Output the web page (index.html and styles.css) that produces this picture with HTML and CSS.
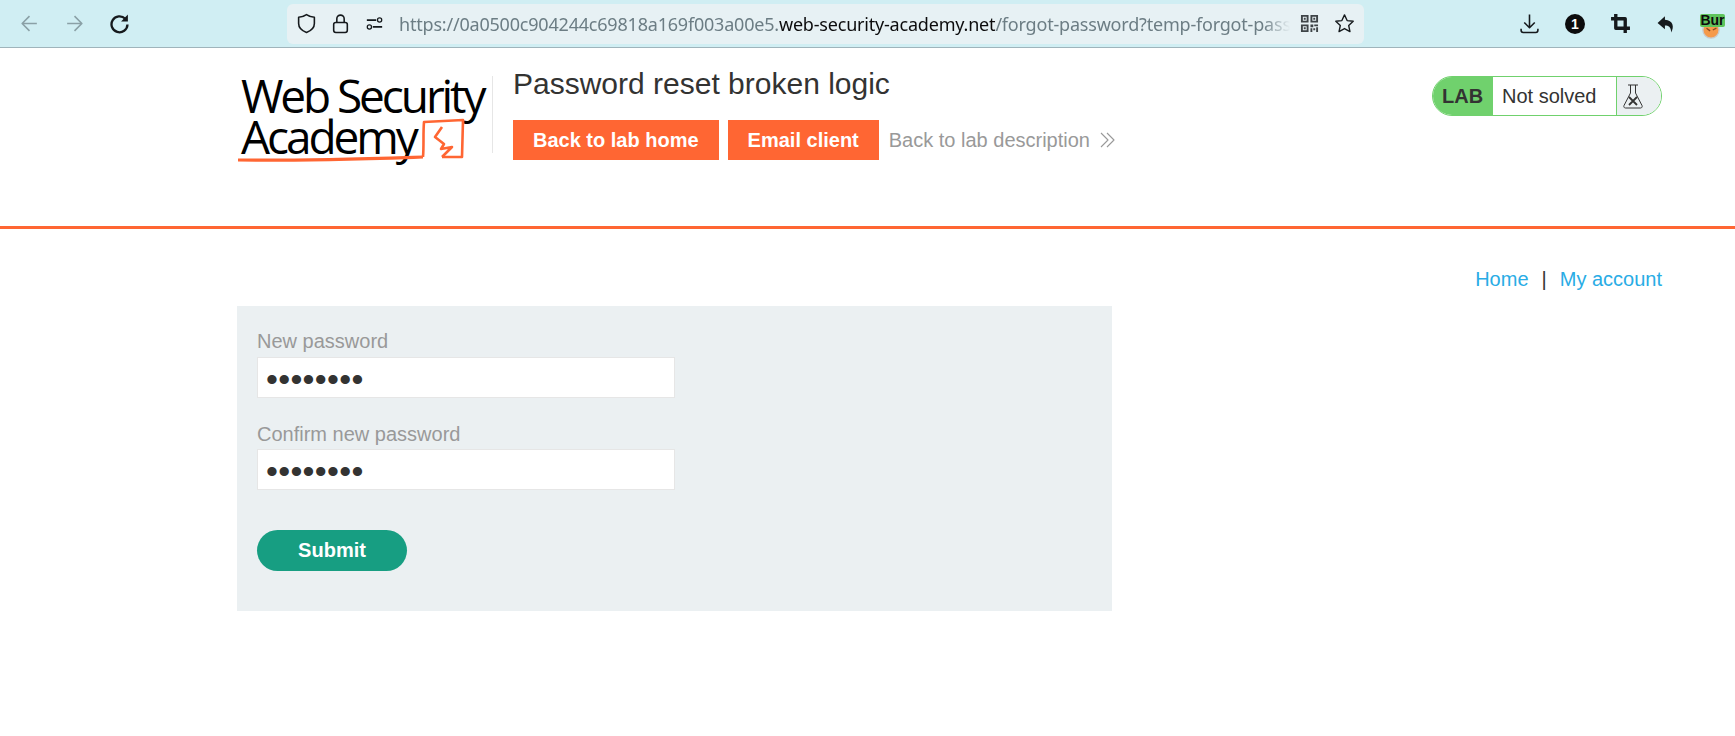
FILE: index.html
```html
<!DOCTYPE html>
<html lang="en">
<head>
    <meta charset="UTF-8">
    <meta name="viewport" content="width=device-width, initial-scale=1.0">
    <title>Password reset broken logic</title>
    <link rel="stylesheet" href="styles.css">
</head>
<body>

    <div class="toolbar">
        <div class="nav-icons">
            <svg class="icon faded" viewBox="0 0 20 20"><path d="M17 10H3M10 3l-7 7 7 7"/></svg>
            <svg class="icon faded" viewBox="0 0 20 20"><path d="M3 10h14M10 3l7 7-7 7"/></svg>
            <svg class="icon" viewBox="0 0 20 20"><path class="thick" d="M15.500 5.500A7.600 7.600 0 1 0 17.600 11"/><path class="solid" d="M18 1.500v6.500h-6.500z"/></svg>
        </div>
        <div class="urlbar">
            <svg class="icon" viewBox="0 0 20 20"><path d="M10 1.500c2.500 1.800 5 2.500 7.500 2.500v6c0 4-3.500 7-7.500 8.500-4-1.500-7.500-4.500-7.500-8.500v-6c2.500 0 5-.7 7.500-2.500z"/></svg>
            <svg class="icon" viewBox="0 0 20 20"><rect x="3.500" y="9" width="13" height="9.500" rx="2"/><path d="M6.500 9V5.500a3.500 3.500 0 0 1 7 0V9"/></svg>
            <svg class="icon small" viewBox="0 0 20 20"><path class="thick" d="M1 6h11M8 14h11"/><circle cx="16" cy="6" r="2.500"/><circle cx="4" cy="14" r="2.500"/></svg>
            <div class="url"><span class="url-dim">https://0a0500c904244c69818a169f003a00e5.</span>web-security-academy.net<span class="url-dim">/forgot-password?temp-forgot-password-token=x</span></div>
            <svg class="icon qr" viewBox="0 0 20 20"><path class="solid" d="M1 1h8v8H1zM11 1h8v8h-8zM1 11h8v8H1zM3 3v4h4V3zM13 3v4h4V3zM3 13v4h4v-4z" fill-rule="evenodd"/><path class="solid" d="M4 4h2v2H4zM14 4h2v2h-2zM4 14h2v2H4zM11 11h3v3h-3zM15 11h4v2h-4zM11 15h2v4h-2zM14 15h2v2h-2zM17 14h2v5h-2z"/></svg>
            <svg class="icon star" viewBox="0 0 20 20"><path d="M10 1.800l2.500 5.400 5.800.7-4.300 4 1.200 5.800-5.200-2.900-5.200 2.900 1.200-5.800-4.300-4 5.800-.7z"/></svg>
        </div>
        <div class="ext-icons">
            <svg class="icon" viewBox="0 0 20 20"><path d="M10 1.500v12M5 9l5 5 5-5M2 15v1.500a2 2 0 0 0 2 2h12a2 2 0 0 0 2-2V15"/></svg>
            <div class="count-badge">1</div>
            <svg class="icon" viewBox="0 0 20 20"><path class="heavy" d="M5.500 1v13.500H19M1 5.500h13.500V19"/></svg>
            <svg class="icon" viewBox="0 0 20 20"><path class="solid" d="M8.500 3L1.500 9.500l7 6v-3.500c3.500 0 5.500 1 6 6.500 3-5 2-11.500-6-12z"/></svg>
            <div class="burp-ext">
                <svg class="burp-face" viewBox="0 0 20 20"><circle cx="10" cy="10" r="9"/><path d="M5 8l4 3M12 10l4-2"/></svg>
                <span class="burp-tag">Bur</span>
            </div>
        </div>
    </div>

    <div class="lab-header">
        <div class="header-inner">
            <div class="logo">
                <div class="logo-text">Web Security</div>
                <div class="logo-text">Academy</div>
                <svg class="logo-mark" viewBox="0 0 256 94">
                    <path class="swash" d="M1 88c60 1 120-1 185-3"/>
                    <path d="M186 85c1-12 0-24 1-35l39-2-1 37-20 0"/>
                    <path d="M205 55l-7 10 9 7-3 5 11-2-10 10"/>
                </svg>
            </div>
            <div class="logo-sep"></div>
            <div class="lab-info">
                <h2>Password reset broken logic</h2>
                <div class="lab-links">
                    <a class="btn-orange">Back to lab home</a>
                    <a class="btn-orange">Email client</a>
                    <a class="lab-desc">Back to lab description
                        <svg class="chevrons" viewBox="0 0 16 16"><path d="M2 1l7 7-7 7M8 1l7 7-7 7"/></svg>
                    </a>
                </div>
            </div>
            <div class="lab-status">
                <span class="status-lab">LAB</span>
                <span class="status-text">Not solved</span>
                <span class="status-flask">
                    <svg viewBox="0 0 20 25"><path d="M5 1h10M7.500 1v8L1 21.500c-.5 1.200 0 2.500 1.500 2.500h15c1.500 0 2-1.300 1.500-2.500L12.500 9V1"/><path class="thick" d="M6 13l8 8M14 13l-8 8"/></svg>
                </span>
            </div>
        </div>
    </div>

    <div class="content">
        <div class="top-links">
            <a>Home</a>
            <span class="sep">|</span>
            <a>My account</a>
        </div>
        <form class="reset-form">
            <label for="newPass">New password</label>
            <input id="newPass" type="password" value="peter123">
            <label for="confirmPass">Confirm new password</label>
            <input id="confirmPass" type="password" value="peter123">
            <button type="button">Submit</button>
        </form>
    </div>

</body>
</html>
```

FILE: styles.css
```css
* {
    box-sizing: border-box;
}
body {
    margin: 0;
    background: white;
    font-family: "Liberation Sans", Arial, sans-serif;
    font-size: 20px;
    color: #333332;
    overflow: hidden;
}
svg path, svg rect, svg circle {
    fill: none;
    stroke: currentColor;
    stroke-width: 1.500;
    stroke-linejoin: round;
}
svg path.solid {
    fill: currentColor;
    stroke: none;
}
svg path.thick {
    stroke-width: 2.200;
}
svg path.heavy {
    stroke-width: 3.200;
}

/* browser bar */
.toolbar {
    height: 48px;
    display: flex;
    align-items: center;
    background: #d0eef3;
    border-bottom: 1px solid #9fb4bb;
    color: #15191c;
}
.icon {
    width: 21px;
    height: 21px;
    flex: none;
}
.icon.faded {
    color: #8aa0a6;
}
.icon.small {
    width: 17px;
    height: 17px;
}
.nav-icons {
    width: 287px;
    padding-left: 19px;
    display: flex;
    gap: 24px;
}
.urlbar {
    width: 1077px;
    height: 40px;
    display: flex;
    align-items: center;
    padding: 0 9px 0 9px;
    background: #e7f1f4;
    border-radius: 6px;
}
.urlbar .icon:nth-child(2) {
    margin-left: 13px;
}
.urlbar .icon.small {
    margin-left: 15px;
}
.url {
    flex: 1;
    margin-left: 16px;
    overflow: hidden;
    white-space: nowrap;
    font-family: "Noto Sans", sans-serif;
    font-size: 18px;
    letter-spacing: -0.2px;
    color: #0c0c0d;
    -webkit-mask-image: linear-gradient(to right, black 97%, transparent);
    mask-image: linear-gradient(to right, black 97%, transparent);
}
.url-dim {
    color: #6c7d84;
}
.icon.qr {
    width: 19px;
    height: 19px;
    margin: 0 15px 0 10px;
    opacity: 0.8;
}
.icon.star path {
    stroke-width: 1.300;
}
.ext-icons {
    flex: 1;
    padding-left: 155px;
    display: flex;
    align-items: center;
    gap: 25px;
}
.count-badge {
    width: 20px;
    height: 20px;
    border-radius: 50%;
    background: #0c0c0d;
    color: white;
    font-size: 14px;
    font-weight: bold;
    line-height: 20px;
    text-align: center;
}
.burp-ext {
    position: relative;
    width: 25px;
    height: 26px;
    align-self: flex-start;
    margin: 6px 0 0 -2px;
}
.burp-face {
    display: block;
    width: 18px;
    height: 18px;
    margin: 7px 0 0 2px;
    color: #8a4a20;
}
.burp-face circle {
    fill: #f59a4a;
    stroke: #c9c9c9;
}
.burp-tag {
    position: absolute;
    top: 0;
    left: 0;
    width: 25px;
    height: 13px;
    background: #5fc45c;
    border-radius: 2px;
    color: #0c0c0d;
    font-family: "Liberation Sans", Arial, sans-serif;
    font-size: 14px;
    font-weight: bold;
    line-height: 13px;
    text-align: center;
}

/* lab banner */
.lab-header {
    height: 181px;
    border-bottom: 3px solid #ff6633;
}
.header-inner {
    width: 1425px;
    margin-left: 237px;
    padding-top: 24px;
    display: flex;
    align-items: flex-start;
}
.logo {
    position: relative;
    width: 255px;
    height: 94px;
    padding-top: 3px;
    color: #000;
}
.logo-text {
    font-family: "Open Sans", sans-serif;
    font-size: 46px;
    font-weight: 500;
    letter-spacing: -3.100px;
    line-height: 41px;
    padding-left: 4px;
    white-space: nowrap;
}
.logo-mark {
    position: absolute;
    top: 0;
    left: 0;
    width: 256px;
    height: 94px;
    color: #ff6633;
}
.logo-mark path {
    stroke-width: 2.600;
}
.logo-mark path.swash {
    stroke-width: 3.200;
}
.logo-sep {
    width: 1px;
    height: 77px;
    margin-top: 4px;
    background: #e6e6e6;
}
.lab-info {
    margin: -6px 0 0 20px;
    width: 820px;
}
h2 {
    margin: 0;
    font-size: 30px;
    font-weight: normal;
    line-height: 36px;
}
.lab-links {
    margin-top: 18px;
    display: flex;
    align-items: center;
    gap: 9px;
}
.btn-orange {
    height: 40px;
    padding: 0 20px;
    background: #ff6633;
    color: white;
    font-weight: bold;
    line-height: 40px;
}
.lab-desc {
    margin-left: 1px;
    color: #999;
    display: flex;
    align-items: center;
    gap: 9px;
}
.chevrons {
    width: 16px;
    height: 16px;
}
.chevrons path {
    stroke-width: 1.100;
}
.lab-status {
    margin: 4px 0 0 auto;
    width: 230px;
    height: 40px;
    display: flex;
    flex: none;
    border: 1px solid #70d16d;
    border-radius: 20px;
    overflow: hidden;
    line-height: 38px;
}
.status-lab {
    width: 60px;
    padding-left: 9px;
    background: #70d16d;
    font-weight: bold;
}
.status-text {
    width: 123px;
    padding-left: 9px;
}
.status-flask {
    flex: 1;
    padding: 7px 0 0 6px;
    background: #ebf0f2;
    border-left: 1px solid #70d16d;
}
.status-flask svg {
    display: block;
    width: 20px;
    height: 25px;
}
.status-flask path {
    stroke-width: 1;
}
.status-flask path.thick {
    stroke-width: 1.800;
}

/* page body */
.content {
    width: 1425px;
    margin-left: 237px;
}
.top-links {
    height: 77px;
    padding-top: 39px;
    display: flex;
    justify-content: flex-end;
    gap: 13px;
    line-height: 23px;
    color: #29ace5;
}
.sep {
    color: #333332;
}
.reset-form {
    width: 875px;
    height: 305px;
    padding: 21px 20px 0;
    background: #ebf0f2;
    display: flex;
    flex-direction: column;
    align-items: flex-start;
}
label {
    color: #999;
    line-height: 29px;
}
label:first-child {
    margin-bottom: 1px;
}
input {
    width: 418px;
    height: 41px;
    margin-bottom: 22px;
    padding: 3px 8px 0;
    border: 1px solid #e6e6e6;
    background: white;
    font-family: "Liberation Sans", Arial, sans-serif;
    font-size: 34px;
    letter-spacing: 0.3px;
    color: #333332;
}
button {
    width: 150px;
    height: 41px;
    margin-top: 18px;
    border: none;
    border-radius: 21px;
    background: #179e82;
    color: white;
    font-family: "Liberation Sans", Arial, sans-serif;
    font-size: 20px;
    font-weight: bold;
}
```
